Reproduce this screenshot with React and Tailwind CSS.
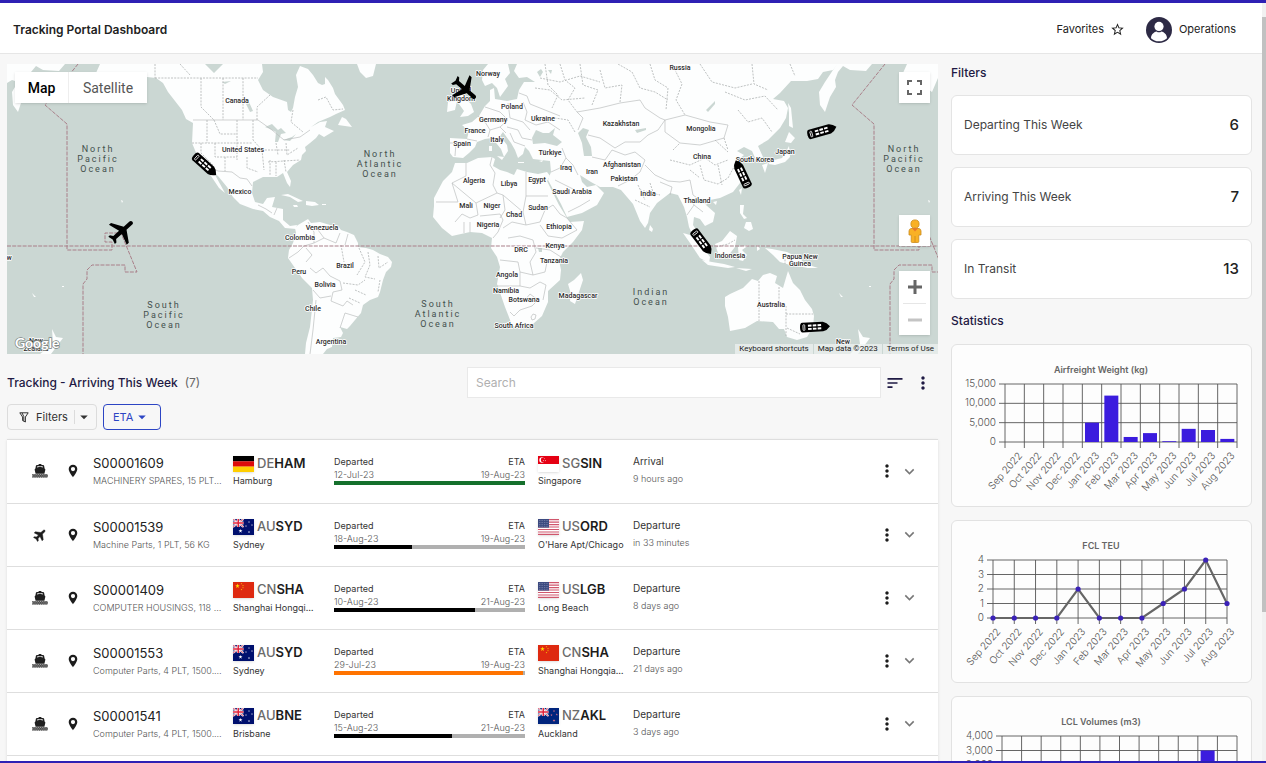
import React from 'react';
import {
  MdMoreVert,
  MdExpandMore,
  MdSort,
  MdStarBorder,
  MdArrowDropDown,
} from 'react-icons/md';

const LAND = [
  // North America
  'M96 73 L100 64 L262 64 L263 72 L258 80 L263 90 L273 97 L287 102 L288 110 L291 112 L293 108 L295 97 L298 87 L296 75 L300 66 L308 69 L313 75 L318 83 L322 85 L325 84 L325 77 L328 80 L333 88 L335 94 L343 105 L345 110 L336 114 L330 117 L318 122 L311 127 L320 122 L327 121 L325 127 L334 131 L324 137 L319 134 L316 138 L310 143 L305 147 L306 151 L302 155 L301 160 L293 165 L287 172 L291 181 L290 187 L287 183 L283 173 L277 177 L269 177 L263 177 L253 182 L252 193 L255 202 L263 204 L267 198 L275 197 L272 207 L283 209 L283 220 L290 226 L297 225 L296 229 L285 228 L279 221 L270 217 L263 211 L253 209 L240 204 L233 197 L227 187 L218 176 L214 173 L225 193 L219 188 L211 176 L205 168 L197 155 L192 143 L193 123 L186 119 L182 110 L175 101 L168 92 L163 83 L156 78 L147 77 L135 73 L120 82 L105 80 Z',
  // Newfoundland, Greenland, Caribbean
  'M338 125 L342 117 L346 119 L352 127 L345 126 Z',
  'M357 64 L376 64 L373 76 L366 78 L360 72 Z',
  'M281 195 L288 194 L303 201 L298 202 L290 197 Z',
  'M306 201 L315 202 L319 205 L312 206 L306 205 Z M293 205 l4 0 l1 2 l-4 0 Z M322 204 h4 v1 h-4 Z',
  // South America
  'M295 228 L298 225 L308 219 L311 223 L320 222 L330 225 L337 225 L341 230 L347 232 L354 235 L358 243 L358 247 L366 248 L373 250 L380 254 L388 257 L392 262 L391 267 L386 272 L383 280 L380 292 L378 297 L370 300 L363 305 L361 313 L355 320 L350 326 L347 329 L340 327 L343 333 L341 337 L333 338 L332 347 L327 349 L323 354 L305 354 L306 343 L310 327 L313 300 L312 288 L302 278 L295 268 L288 258 L289 250 L293 243 L296 233 Z',
  // Africa
  'M455 163 L467 163 L478 158 L492 157 L495 159 L493 166 L500 170 L507 172 L514 175 L517 169 L527 172 L538 174 L547 172 L550 176 L547 181 L553 193 L559 205 L567 218 L570 222 L584 221 L582 230 L573 242 L563 252 L559 260 L561 270 L560 280 L548 291 L548 302 L542 316 L533 324 L517 328 L512 325 L505 307 L497 284 L500 267 L497 257 L491 248 L492 238 L482 233 L470 232 L452 236 L442 228 L433 217 L434 206 L434 198 L443 181 L452 172 Z',
  'M568 284 L574 280 L581 273 L583 280 L575 304 L570 301 L571 294 Z',
  // Eurasia
  'M450 138 L467 139 L469 131 L462 125 L472 122 L479 116 L485 106 L490 101 L490 90 L494 88 L495 99 L507 101 L517 99 L519 90 L524 82 L535 82 L527 77 L519 78 L514 71 L517 64 L838 64 L833 70 L823 72 L818 79 L807 81 L791 81 L780 93 L773 99 L784 101 L788 108 L786 118 L780 128 L768 140 L758 146 L763 157 L756 160 L752 151 L744 147 L737 151 L744 155 L737 161 L741 173 L740 183 L733 192 L720 198 L710 200 L706 205 L715 213 L713 222 L705 226 L700 219 L694 217 L693 225 L698 233 L700 242 L694 238 L689 227 L687 217 L684 207 L678 195 L670 193 L657 203 L650 213 L648 223 L645 228 L640 221 L633 204 L627 197 L621 190 L613 187 L600 187 L591 182 L580 175 L582 182 L587 187 L596 185 L604 193 L597 205 L582 213 L567 217 L561 204 L555 193 L548 180 L551 172 L550 161 L533 159 L529 151 L525 147 L523 154 L518 158 L515 150 L511 143 L503 132 L500 136 L507 145 L508 151 L504 157 L501 149 L492 138 L485 139 L477 142 L475 147 L469 153 L463 158 L453 157 L450 153 Z',
  // Kamchatka and Alaska on the right edge
  'M825 112 L820 105 L819 92 L825 82 L833 70 L837 64 L872 64 L866 71 L850 70 L843 66 L838 72 L835 80 L836 87 L830 97 Z',
  'M903 73 L907 64 L938 64 L938 78 L932 92 L915 80 Z',
  'M7 64 L65 64 L59 71 L43 70 L36 66 L31 72 L28 80 L29 87 L23 97 L18 112 L13 105 L12 92 L18 82 L12 80 L7 83 Z',
  // Scandinavia, Britain, Ireland
  'M482 80 L483 70 L488 64 L508 64 L510 73 L505 79 L508 86 L500 97 L497 88 L492 83 L485 86 Z',
  'M455 90 L463 87 L464 97 L471 104 L474 112 L468 116 L460 117 L464 111 L459 104 Z M448 102 L457 101 L455 110 L447 112 Z',
  // Mediterranean islands
  'M489 146 h3 v5 h-3 Z M497 156 l7 1 l-2 3 Z M518 162 h6 v1 h-6 Z M539 161 l4 -1 l-1 2 Z',
  // Sri Lanka, Japan, Sakhalin, Taiwan, Hainan
  'M650 225 L653 229 L652 232 L649 230 Z',
  'M762 165 L768 163 L765 173 Z M768 164 L774 160 L782 158 L787 150 L789 146 L790 157 L785 162 L775 165 Z M785 142 L789 132 L795 138 L791 143 Z',
  'M788 103 L791 108 L793 128 L789 126 L789 113 Z M739 190 l3 -2 l-1 7 Z M713 202 l4 -1 l-1 4 Z',
  // Philippines and Indonesia
  'M740 205 L744 205 L743 214 L747 218 L744 219 L740 213 Z M746 222 L751 222 L753 229 L749 231 L744 228 Z',
  'M683 233 L690 235 L704 249 L710 257 L709 263 L700 258 L690 243 Z',
  'M702 260 L712 262 L724 264 L735 267 L728 268 L708 265 Z',
  'M715 244 L722 241 L730 231 L737 236 L735 247 L728 256 L718 253 Z',
  'M738 247 L749 245 L742 250 L747 255 L743 261 L739 260 Z',
  'M757 245 l3 4 l-3 2 Z M736 268 l16 1 l-6 2 Z',
  'M765 248 L772 249 L787 252 L799 258 L806 264 L818 268 L808 268 L797 266 L790 265 L780 262 L773 255 Z',
  // Australia, New Zealand, Pacific islands
  'M725 297 L730 294 L743 288 L752 279 L758 281 L763 275 L770 273 L777 276 L775 283 L783 288 L788 271 L793 283 L800 290 L805 300 L812 309 L814 316 L813 327 L807 337 L797 340 L787 337 L784 329 L779 329 L773 322 L757 321 L745 328 L730 331 L728 317 L725 306 Z',
  'M858 329 L863 337 L870 338 L864 346 L858 354 L850 354 L860 344 Z M52 329 L56 337 L63 338 L57 346 L51 354 L40 354 L53 344 Z',
  'M839 293 l4 4 l-2 0 Z M32 293 l4 4 l-2 0 Z M121 200 l2 1 l-1 2 Z M928 200 l2 1 l-1 2 Z M62 286 h2 v1 h-2 Z M869 286 h2 v1 h-2 Z',
];

const WATER = [
  'M532 138 L536 130 L543 133 L549 133 L555 128 L553 135 L562 142 L557 146 L545 143 L533 144 Z',
  'M578 133 L583 128 L589 130 L586 137 L591 147 L592 156 L584 156 L582 143 Z',
  'M265 127 L272 124 L278 130 L281 128 L286 133 L281 134 L278 142 L275 142 L276 132 L270 129 Z M283 140 L292 137 L296 134 L290 141 Z',
  'M537 72 l4 -3 l2 3 l-3 5 Z M548 70 l4 0 l-1 4 Z M635 130 l11 -2 l0 2 l-9 3 Z M706 110 l9 -9 l0 3 l-7 8 Z',
  'M205 64 L223 64 L214 73 Z M246 104 l3 -2 l4 9 l-3 1 Z M538 248 l4 0 l0 4 l-3 0 Z M222 82 l9 -1 l-6 3 Z',
];

const BORDERS = [
  'M193 120 L258 120 L272 130 L284 140 L300 137 L310 130',
  'M205 165 L218 171 L232 172 L240 178 L247 179 L252 186',
  'M258 205 L266 209 L272 213 M277 208 L274 215',
  'M289 258 L298 252 L304 246 L314 243 L314 232 L308 222 M314 243 L324 238 L318 230 M324 238 L336 243 L340 233 M345 245 L348 234 M310 268 L316 273 L323 268 L330 276 L340 281 L342 290 L333 292 L331 301 L343 306 L347 301 L353 305 M313 290 L320 298 L331 296 M306 262 L312 255 L306 248',
  'M340 328 L345 313 L358 317 M316 300 L313 330 L310 354',
  'M492 157 L490 165 L495 173 L493 185 L497 193 L476 203 L452 183 L466 176 L466 163 M526 172 L526 196 L548 196 M526 196 L523 212 L503 195 L497 193 M452 183 L458 202 L436 202 M476 203 L478 215 L470 218 L462 214 L455 222 M480 216 L500 214 L503 220 L498 232 L493 238 M503 195 L505 210 L500 218 M523 212 L526 225 L512 222 L503 228 M526 225 L540 222 L545 210 L553 205 L560 214 L567 218 L577 230 L562 238 L548 236 L540 225 M508 238 L520 236 L533 240 L536 252 L530 262 L533 275 L520 272 L518 262 L500 260 M536 248 L550 250 L561 257 M533 275 L545 272 L547 262 M520 272 L520 286 L497 286 M520 286 L530 288 L540 282 L546 285 L543 300 M525 300 L530 294 L538 300 L532 306 L520 310 L514 316 L510 312 M470 232 L470 222 M464 233 L464 222',
  'M531 317 l2 -3 l3 1 l-1 4 l-3 1 Z',
  'M450 143 L456 143 L455 156 M467 139 L477 141 M478 116 L485 122 L490 130 L488 137 M485 107 L500 112 L508 120 L500 127 L490 130 M508 103 L510 118 L523 122 L530 130 M523 102 L527 112 L525 120 L536 125 L548 122 L560 130 M507 127 L518 130 L522 138 L532 140 M510 133 L514 142 L525 146 M519 93 L527 96 L530 104 L545 110 L560 116 M500 127 L506 133',
  'M578 130 L583 118 L577 112 L600 108 L620 103 L640 100 L645 108 L660 118 L665 120 L658 130 L648 135 L640 142 L625 142 L615 148 L600 138 L588 135 M665 120 L685 115 L710 122 L728 125 L724 138 L700 145 L680 143 L665 132 L665 120 M592 157 L605 160 L612 150 L625 155 L635 152 L645 160 L640 172 L630 180 L618 186 M551 172 L560 168 L566 158 L573 165 L578 175 M555 180 L565 185 L575 190 M566 158 L562 148 M645 165 L655 175 L668 181 L680 182 L690 180 M660 182 L672 187 L670 195 M690 180 L693 195 L700 200 L706 204 M687 215 L694 205 L690 198 M694 205 L703 212',
  'M568 212 L580 206 L590 200',
];

const DOTTED = [
  'M155 78 L258 78 M201 78 L201 107 L214 120 M223 78 L223 120 M243 78 L243 120 M257 120 L257 107 L270 95 M155 64 L155 78 M293 110 L291 122 L303 132 M318 100 L326 97 L333 110 L343 109 M192 143 L252 143 M207 120 L207 143 M214 120 L220 134 L237 134 M237 120 L237 160 M253 120 L253 140 L262 150 M201 143 L201 153 L213 165 M215 143 L215 157 L237 157 M225 157 L225 171 M247 157 L247 168 L258 172 M252 150 L290 150 M262 150 L264 170 M270 160 L270 176 M276 162 L276 176 M284 160 L286 172 M268 162 L300 160 M276 143 L278 155 M286 143 L287 155 L298 148 M180 64 L190 75',
  'M359 248 L365 262 L357 275 M368 252 L370 265 L365 277 L375 279 M378 256 L379 268 L388 262 M343 283 L358 285 L365 280 M355 290 L366 295 M349 298 L360 303 M341 245 L344 262 M380 280 L378 292',
  'M545 64 L548 85 L558 95 L552 108 M560 64 L565 80 L575 88 L568 100 L577 112 M580 64 L583 85 L598 90 L592 105 M600 70 L605 88 L622 85 L620 102 M618 64 L632 72 L640 88 L655 92 L668 100 M650 64 L655 80 L668 88 L666 110 M535 88 L550 90 L562 100 L585 98 M540 78 L560 82 L580 76 L600 82 M672 64 L682 84 L676 100 L685 115 M700 64 L712 82 L735 88 L752 84 M752 64 L754 84 L768 90 M725 92 L745 100 L765 96 L778 110 M738 110 L748 122 L762 118 L772 132 M790 64 L795 76 M575 132 L568 120 L555 118',
  'M670 160 L690 165 L705 158 L715 165 L728 160 M700 165 L704 180 L718 184 L728 178 M718 165 L722 185 M690 170 L700 178 M735 165 L728 178 M724 138 L728 150 M673 150 L680 143 M638 185 L645 200 M650 183 L655 198 M635 200 L650 207 M640 190 L660 195 M715 140 L728 152',
  'M759 281 L759 321 M779 287 L779 306 L786 306 L786 336 M786 314 L813 314 M787 328 L800 334 M785 253 L785 264 M716 247 L728 244 L735 240',
];

const DATE_LINE =
  'M78 64 L45 105 L67 124 L67 250 L112 250 L112 242 L105 242 L105 233 L121 233 L137 272 L125 272 L125 265 L92 265 L87 270 L87 279 L83 284 L83 354';

const COUNTRIES = [
  ['Canada', 237, 103], ['United States', 243, 152], ['Mexico', 240, 194],
  ['Venezuela', 322, 230], ['Colombia', 300, 240], ['Brazil', 345, 268],
  ['Peru', 299, 274], ['Bolivia', 325, 287], ['Chile', 313, 311],
  ['Argentina', 331, 344], ['Norway', 488, 76], ['United', 461, 93],
  ['Kingdom', 461, 101], ['Poland', 512, 109], ['Germany', 493, 122],
  ['Ukraine', 543, 121], ['France', 475, 133], ['Italy', 497, 142],
  ['Spain', 462, 146], ['Türkiye', 550, 155], ['Russia', 680, 70],
  ['Kazakhstan', 621, 126], ['Mongolia', 701, 131], ['China', 702, 159],
  ['Japan', 785, 154], ['South Korea', 755, 162], ['Afghanistan', 622, 167],
  ['Pakistan', 624, 181], ['Iran', 592, 174], ['Iraq', 566, 170],
  ['India', 648, 196], ['Thailand', 697, 203], ['Saudi Arabia', 572, 194],
  ['Algeria', 474, 183], ['Libya', 509, 186], ['Egypt', 537, 182],
  ['Mali', 466, 208], ['Niger', 492, 208], ['Chad', 514, 217],
  ['Sudan', 538, 210], ['Nigeria', 488, 227], ['Ethiopia', 559, 229],
  ['Kenya', 555, 248], ['DRC', 521, 252], ['Tanzania', 554, 263],
  ['Angola', 507, 277], ['Namibia', 506, 293], ['Botswana', 524, 302],
  ['Madagascar', 578, 298], ['South Africa', 514, 328], ['Indonesia', 730, 258],
  ['Papua New', 800, 259], ['Guinea', 800, 266], ['Australia', 771, 307],
  ['New', 843, 344], ['New', 36, 343], ['Zealand', 36, 351], ['w', 9, 260],
];

const OCEANS = [
  [['North', 'Pacific', 'Ocean'], 97, 152],
  [['North', 'Atlantic', 'Ocean'], 379, 157],
  [['South', 'Pacific', 'Ocean'], 163, 308],
  [['South', 'Atlantic', 'Ocean'], 437, 307],
  [['Indian', 'Ocean'], 650, 295],
  [['North', 'Pacific', 'Ocean'], 903, 152],
];

const VESSELS = [
  [205, 165, 42], [742, 174, -115], [702, 242, 53], [822, 131, -16], [815, 327, -3],
];

const PLANE =
  'M21 16v-2l-8-5V3.5c0-.83-.67-1.5-1.5-1.5S10 2.67 10 3.5V9l-8 5v2l8-2.5V19l-2 1.5V22l3.5-1 3.5 1v-1.5L13 19v-5.5l8 2.5z';

function Vessel({ x, y, angle }) {
  return (
    <g transform={`translate(${x} ${y}) rotate(${angle})`}>
      <path d="M-12.5 -4.8 H8 Q12 -4 15 0 Q12 4 8 4.8 H-12.5 Q-15 4.8 -15 0 Q-15 -4.8 -12.5 -4.8 Z" fill="#000" />
      <rect x="-12" y="-2.8" width="1.8" height="5.6" rx="0.6" fill="none" stroke="#fff" strokeWidth="0.8" />
      <path d="M-7 -2.6h3.6v1.9h-3.6z M-2.2 -2.6h3.6v1.9h-3.6z M2.6 -2.6h3.6v1.9h-3.6z M-7 0.7h3.6v1.9h-3.6z M-2.2 0.7h3.6v1.9h-3.6z M2.6 0.7h3.6v1.9h-3.6z" fill="#fff" />
    </g>
  );
}

function WorldMap() {
  return (
    <div className="relative h-[290px] overflow-hidden bg-[#cbd7d3] font-['Roboto',sans-serif]">
      <svg viewBox="7 64 931 290" preserveAspectRatio="xMidYMid slice" className="block h-full w-full" role="img" aria-label="World map">
        <g fill="#fdfefe">
          {LAND.map((d) => <path key={d} d={d} />)}
        </g>
        <g fill="#cbd7d3">
          {WATER.map((d) => <path key={d} d={d} />)}
        </g>
        <g fill="none" stroke="#bcbfbf" strokeWidth="0.7" strokeLinejoin="round">
          {BORDERS.map((d) => <path key={d} d={d} />)}
        </g>
        <g fill="none" stroke="#aeb2b2" strokeWidth="0.8" strokeDasharray="2 1.2">
          {DOTTED.map((d) => <path key={d} d={d} />)}
        </g>
        <g fill="none" stroke="#a97f89" strokeWidth="1" strokeDasharray="4 1.2">
          <path d="M7 246 H938" />
          <path d={DATE_LINE} />
          <path d={DATE_LINE} transform="translate(807 0)" />
        </g>
        <g className="text-[7px] font-medium" fill="#2b2b2b" stroke="#fff" strokeWidth="1.6" paintOrder="stroke" strokeLinejoin="round" textAnchor="middle">
          {COUNTRIES.map(([name, x, y]) => <text key={`${name}${x}`} x={x} y={y}>{name}</text>)}
        </g>
        <g className="text-[9px] tracking-[2px]" fill="#44504d" textAnchor="middle">
          {OCEANS.map(([lines, x, y]) => (
            <text key={`${x}-${y}`} x={x} y={y}>
              {lines.map((line, i) => <tspan key={line} x={x + 1} dy={i ? 10 : 0}>{line}</tspan>)}
            </text>
          ))}
        </g>
        <text x="15" y="348" className="font-['Lato',sans-serif] text-[14px] font-bold" fill="#fff" stroke="#7d8583" strokeWidth="1.4" paintOrder="stroke">Google</text>
        <path d={PLANE} transform="translate(122 231) rotate(48) scale(1.4) translate(-11.5 -12)" />
        <path d={PLANE} transform="translate(465 89) rotate(131) scale(1.4) translate(-11.5 -12)" />
        {VESSELS.map(([x, y, angle]) => <Vessel key={x} x={x} y={y} angle={angle} />)}
      </svg>

      <div className="absolute left-2 top-2 flex h-[31px] bg-white text-sm shadow">
        <button type="button" className="w-[54px] border-r border-[#eee] font-medium text-black">Map</button>
        <button type="button" className="w-[78px] text-[#565656]">Satellite</button>
      </div>

      <div className="absolute right-2 top-2 flex h-[263px] w-[31px] flex-col">
        <button type="button" aria-label="Toggle fullscreen" className="flex h-[31px] items-center justify-center bg-white shadow">
          <svg width="15" height="15" viewBox="0 0 15 15" fill="none" stroke="#666" strokeWidth="2">
            <path d="M1 5V1H5 M10 1H14V5 M14 10V14H10 M5 14H1V10" />
          </svg>
        </button>
        <button type="button" aria-label="Street View" className="mt-auto flex h-[31px] items-center justify-center bg-white shadow">
          <svg width="14" height="24" viewBox="0 0 14 24">
            <path d="M3 9.5 Q1 10 1 12 V16 H3.2 V22.5 Q3.2 23.5 4.2 23.5 H9.8 Q10.8 23.5 10.8 22.5 V16 H13 V12 Q13 10 11 9.5 Z" fill="#f9b125" stroke="#c98a1c" strokeWidth="0.8" />
            <circle cx="7" cy="5" r="4.1" fill="#f9b125" stroke="#c98a1c" strokeWidth="0.8" />
            <path d="M4 9.2 H10 L7 12.5 Z" fill="#e9762b" />
            <path d="M7 17v6" stroke="#c98a1c" strokeWidth="0.8" />
          </svg>
        </button>
        <div className="mt-[25px] flex h-[64px] flex-col items-center bg-white shadow">
          <button type="button" aria-label="Zoom in" className="flex h-8 w-full items-center justify-center">
            <svg width="14" height="14" viewBox="0 0 14 14" stroke="#666" strokeWidth="3"><path d="M7 0V14M0 7H14" /></svg>
          </button>
          <div className="h-px w-[23px] bg-[#e6e6e6]" />
          <button type="button" aria-label="Zoom out" className="flex h-[31px] w-full items-center justify-center">
            <svg width="14" height="14" viewBox="0 0 14 14" stroke="#c4c4c4" strokeWidth="3"><path d="M0 7H14" /></svg>
          </button>
        </div>
      </div>

      <div className="absolute bottom-0 right-0 flex h-[10px] gap-px text-[8px] leading-[10px] text-[#222]">
        <button type="button" className="bg-[#f0f3f2]/70 px-1">Keyboard shortcuts</button>
        <span className="bg-[#f0f3f2]/70 px-1">Map data ©2023</span>
        <a href="#terms" className="bg-[#f0f3f2]/70 px-1">Terms of Use</a>
      </div>
    </div>
  );
}

const STAR = 'M0 -1 L0.23 -0.31 L0.95 -0.31 L0.36 0.12 L0.59 0.81 L0 0.38 L-0.59 0.81 L-0.36 0.12 L-0.95 -0.31 L-0.23 -0.31 Z';

function Star({ x, y, r, fill }) {
  return <path d={STAR} fill={fill} transform={`translate(${x} ${y}) scale(${r})`} />;
}

function UnionJack() {
  return (
    <g>
      <path d="M0 0 L10.5 8 M10.5 0 L0 8" stroke="#fff" strokeWidth="1.8" />
      <path d="M0 0 L10.5 8 M10.5 0 L0 8" stroke="#e0233c" strokeWidth="0.7" />
      <path d="M5.25 0V8M0 4H10.5" stroke="#fff" strokeWidth="2.8" />
      <path d="M5.25 0V8M0 4H10.5" stroke="#e0233c" strokeWidth="1.5" />
    </g>
  );
}

function FlagArt({ code }) {
  switch (code) {
    case 'DE':
      return (
        <g>
          <rect width="21" height="5.4" fill="#000" />
          <rect y="5.3" width="21" height="5.4" fill="#dd0b0b" />
          <rect y="10.6" width="21" height="5.4" fill="#ffce00" />
        </g>
      );
    case 'AU':
      return (
        <g>
          <rect width="21" height="16" fill="#00106e" />
          <UnionJack />
          <Star x={7.5} y={12} r={2.1} fill="#fff" />
          <Star x={16} y={3} r={1} fill="#fff" />
          <Star x={13} y={7} r={1} fill="#fff" />
          <Star x={19} y={6} r={1} fill="#fff" />
          <Star x={16} y={13} r={1.2} fill="#fff" />
        </g>
      );
    case 'NZ':
      return (
        <g>
          <rect width="21" height="16" fill="#00247d" />
          <UnionJack />
          <Star x={16} y={3} r={1.2} fill="#e8788a" />
          <Star x={13.5} y={7} r={1.2} fill="#e8788a" />
          <Star x={18.8} y={6.5} r={1.2} fill="#e8788a" />
          <Star x={16} y={12.5} r={1.4} fill="#e8788a" />
        </g>
      );
    case 'CN':
      return (
        <g>
          <rect width="21" height="16" fill="#de2910" />
          <Star x={4.5} y={4} r={2.4} fill="#ffde00" />
          <Star x={8.5} y={1.8} r={0.8} fill="#ffde00" />
          <Star x={10} y={3.6} r={0.8} fill="#ffde00" />
          <Star x={10} y={5.8} r={0.8} fill="#ffde00" />
          <Star x={8.5} y={7.6} r={0.8} fill="#ffde00" />
        </g>
      );
    case 'SG':
      return (
        <g>
          <rect width="21" height="16" fill="#fff" />
          <rect width="21" height="8" fill="#e50013" />
          <circle cx="4" cy="4" r="2.7" fill="#fff" />
          <circle cx="5.2" cy="4" r="2.4" fill="#e50013" />
          <Star x={6.4} y={2.6} r={0.7} fill="#fff" />
          <Star x={5.4} y={4.8} r={0.7} fill="#fff" />
          <Star x={7.4} y={4.8} r={0.7} fill="#fff" />
        </g>
      );
    default:
      return (
        <g>
          <rect width="21" height="16" fill="#fff" />
          <path d="M0 0.6H21M0 3.1H21M0 5.6H21M0 8H21M0 10.5H21M0 13H21M0 15.4H21" stroke="#d0566c" strokeWidth="1.2" />
          <rect width="11" height="8.6" fill="#3c4a80" />
          <path d="M1 1.5H11M1 3.5H11M1 5.5H11M1 7.3H11" stroke="#aab0cc" strokeWidth="0.6" strokeDasharray="0.7 1" />
        </g>
      );
  }
}

function Port({ country, code, name }) {
  return (
    <div>
      <div className="flex h-[17px] items-center gap-[3px]">
        <svg width="21" height="16" viewBox="0 0 21 16" className="shrink-0 shadow" role="img" aria-label={country}>
          <FlagArt code={country} />
        </svg>
        <span className="text-[13px] font-medium text-[#6b6b6b]">
          {country}<span className="font-semibold text-[#1c1c1c]">{code}</span>
        </span>
      </div>
      <div className="truncate text-[9px] leading-[17px] text-[#333]">{name}</div>
    </div>
  );
}

function ShipIcon() {
  return (
    <svg width="16" height="14" viewBox="0 0 16 14" aria-label="Sea" role="img">
      <path d="M6.6 0 H9.4 V0.9 H11 Q11.9 0.9 12.1 1.8 L12.6 4.4 L13.4 5.4 L12.4 9.8 H3.6 L2.6 5.4 L3.4 4.4 L3.9 1.8 Q4.1 0.9 5 0.9 H6.6 Z" fill="#1f1f1f" />
      <path d="M5 3.6 L5.4 2.2 H10.6 L11 3.6 L8 2.8 Z" fill="#fff" />
      <rect x="0.3" y="10.2" width="15.4" height="3.3" fill="#8a8a8a" />
      <path d="M0.3 10.8h15.4M0.3 13h15.4" stroke="#333" strokeWidth="1.1" strokeDasharray="1.1 1.1" />
      <path d="M1.4 11.9h14.3" stroke="#333" strokeWidth="1.1" strokeDasharray="1.1 1.1" />
    </svg>
  );
}

function AirIcon() {
  return (
    <svg width="16" height="14" viewBox="0 0 16 14" aria-label="Air" role="img">
      <path d="M8 0.2 C8.7 0.2 9.1 1 9.1 2 V4.6 L13.6 8 V9.6 L9.1 8.1 V10.8 L10.9 12.2 V13.3 L8 12.6 L5.1 13.3 V12.2 L6.9 10.8 V8.1 L2.4 9.6 V8 L6.9 4.6 V2 C6.9 1 7.3 0.2 8 0.2 Z" fill="#1c1c1c" stroke="#1c1c1c" strokeWidth="0.4" transform="rotate(45 8 7)" />
    </svg>
  );
}

function PinIcon() {
  return (
    <svg width="12" height="14" viewBox="0 0 12 14" aria-label="Location" role="img">
      <path fillRule="evenodd" d="M6 0.8 C3.6 0.8 1.7 2.7 1.7 5.1 C1.7 8.3 6 13.2 6 13.2 C6 13.2 10.3 8.3 10.3 5.1 C10.3 2.7 8.4 0.8 6 0.8 Z M6 3 A2.1 2.1 0 1 1 6 7.2 A2.1 2.1 0 1 1 6 3 Z" fill="#1c1c1c" />
    </svg>
  );
}

const SHIPMENTS = [
  { id: 'S00001609', mode: 'sea', goods: 'MACHINERY SPARES, 15 PLT, 1500 KG', from: ['DE', 'HAM', 'Hamburg'], to: ['SG', 'SIN', 'Singapore'], dep: '12-Jul-23', eta: '19-Aug-23', pct: 100, color: '#15702c', event: 'Arrival', when: '9 hours ago' },
  { id: 'S00001539', mode: 'air', goods: 'Machine Parts, 1 PLT, 56 KG', from: ['AU', 'SYD', 'Sydney'], to: ['US', 'ORD', "O'Hare Apt/Chicago"], dep: '18-Aug-23', eta: '19-Aug-23', pct: 41, color: '#000000', event: 'Departure', when: 'in 33 minutes' },
  { id: 'S00001409', mode: 'sea', goods: 'COMPUTER HOUSINGS, 118 PLT, 900 KG', from: ['CN', 'SHA', 'Shanghai Hongqiao Intl'], to: ['US', 'LGB', 'Long Beach'], dep: '10-Aug-23', eta: '21-Aug-23', pct: 74, color: '#000000', event: 'Departure', when: '8 days ago' },
  { id: 'S00001553', mode: 'sea', goods: 'Computer Parts, 4 PLT, 1500.000 KG', from: ['AU', 'SYD', 'Sydney'], to: ['CN', 'SHA', 'Shanghai Hongqiao Intl'], dep: '29-Jul-23', eta: '19-Aug-23', pct: 99, color: '#ff7300', event: 'Departure', when: '21 days ago' },
  { id: 'S00001541', mode: 'sea', goods: 'Computer Parts, 4 PLT, 1500.000 KG', from: ['AU', 'BNE', 'Brisbane'], to: ['NZ', 'AKL', 'Auckland'], dep: '15-Aug-23', eta: '21-Aug-23', pct: 62, color: '#000000', event: 'Departure', when: '3 days ago' },
];

function ShipmentRow({ s }) {
  return (
    <tr className="h-[63px] border-b border-[#dedede]">
      <td className="pl-[25px]">{s.mode === 'sea' ? <ShipIcon /> : <AirIcon />}</td>
      <td className="pl-2"><PinIcon /></td>
      <td className="pr-[9px] pt-[2px]">
        <div className="text-[13px] leading-[17px] text-[#222]">{s.id}</div>
        <div className="truncate text-[9px] font-light leading-[17px] text-[#555]">{s.goods}</div>
      </td>
      <td className="pr-4 pt-[2px]"><Port country={s.from[0]} code={s.from[1]} name={s.from[2]} /></td>
      <td className="pb-[2px] pr-[13px]">
        <div className="flex justify-between text-[9px] leading-[13px] text-[#333]"><span>Departed</span><span>ETA</span></div>
        <div className="flex justify-between text-[9px] font-light leading-[13px] text-[#555]"><span>{s.dep}</span><span>{s.eta}</span></div>
        <div className="h-1 bg-[#b0b0b0]">
          <div className="h-full" style={{ width: `${s.pct}%`, backgroundColor: s.color }} />
        </div>
      </td>
      <td className="pr-2 pt-[2px]"><Port country={s.to[0]} code={s.to[1]} name={s.to[2]} /></td>
      <td className="pb-[2px]">
        <div className="text-[10px] leading-[17px] text-[#333]">{s.event}</div>
        <div className="text-[9px] font-light leading-[17px] text-[#555]">{s.when}</div>
      </td>
      <td>
        <div className="flex items-center gap-[3px]">
          <button type="button" aria-label="More actions" className="text-[#1c1c1c]"><MdMoreVert size={20} /></button>
          <button type="button" aria-label="Expand" className="text-[#777]"><MdExpandMore size={19} /></button>
        </div>
      </td>
    </tr>
  );
}

const MONTHS = ['Sep 2022', 'Oct 2022', 'Nov 2022', 'Dec 2022', 'Jan 2023', 'Feb 2023', 'Mar 2023', 'Apr 2023', 'May 2023', 'Jun 2023', 'Jul 2023', 'Aug 2023'];

const CHARTS = [
  { title: 'Airfreight Weight (kg)', type: 'bar', left: 53, right: 285, ticks: ['15,000', '10,000', '5,000', '0'], max: 15000, values: [0, 0, 0, 0, 5000, 12000, 1300, 2300, 200, 3400, 3100, 800] },
  { title: 'FCL TEU', type: 'line', left: 41, right: 275, ticks: ['4', '3', '2', '1', '0'], max: 4, values: [0, 0, 0, 0, 2, 0, 0, 0, 1, 2, 4, 1] },
  { title: 'LCL Volumes (m3)', type: 'bar', left: 50, right: 285, ticks: ['4,000', '3,000', '2,000', '1,000', '0'], max: 4000, values: [0, 0, 0, 0, 0, 0, 0, 0, 0, 0, 3000, 0] },
];

function ChartCard({ chart }) {
  const { title, type, left, right, ticks, max, values } = chart;
  const top = 39;
  const bottom = 97;
  const bar = type === 'bar';
  const step = (right - left) / (bar ? 12 : 11);
  const gridCount = bar ? 13 : 12;
  const yOf = (v) => bottom - (v / max) * (bottom - top);
  const xOf = (i) => left + step * (bar ? i + 0.5 : i);
  return (
    <div className="overflow-hidden rounded-md border border-[#e2e2e2] bg-[#fdfdfd]">
      <svg viewBox="0 0 299 161" className="block w-full" role="img" aria-label={title}>
        <text x="149" y="28" textAnchor="middle" className="text-[9px] font-semibold" fill="#666">{title}</text>
        <g stroke="#555" strokeWidth="0.9">
          {ticks.map((t, i) => {
            const y = top + ((bottom - top) * i) / (ticks.length - 1);
            return <line key={t} x1={left - 6} x2={right} y1={y} y2={y} />;
          })}
          {Array.from({ length: gridCount }, (_, i) => (
            <line key={i} x1={left + step * i} x2={left + step * i} y1={top} y2={bottom + 6} />
          ))}
        </g>
        <g className="text-[10px] font-light" fill="#555" textAnchor="end">
          {ticks.map((t, i) => (
            <text key={t} x={left - 9} y={top + ((bottom - top) * i) / (ticks.length - 1) + 3}>{t}</text>
          ))}
          {MONTHS.map((m, i) => (
            <text key={m} transform={`translate(${xOf(i) + 8} ${bottom + 14}) rotate(-49)`}>{m}</text>
          ))}
        </g>
        {bar ? (
          <g fill="#3b1cde">
            {values.map((v, i) => v > 0 && <rect key={i} x={xOf(i) - 7} width="14" y={yOf(v)} height={bottom - yOf(v)} />)}
          </g>
        ) : (
          <g>
            <polyline points={values.map((v, i) => `${xOf(i)},${yOf(v)}`).join(' ')} fill="none" stroke="#666" strokeWidth="2.2" />
            {values.map((v, i) => <circle key={i} cx={xOf(i)} cy={yOf(v)} r="2.6" fill="#3b22b8" />)}
          </g>
        )}
      </svg>
    </div>
  );
}

const FILTERS = [['Departing This Week', 6], ['Arriving This Week', 7], ['In Transit', 13]];

export default function App() {
  return (
    <div className="flex h-screen overflow-hidden border-b-2 border-t-[3px] border-[#2e20b4] bg-[#f7f7f7] font-['Inter',sans-serif]">
      <div className="flex min-w-0 flex-1 flex-col">
        <header className="flex h-[51px] shrink-0 items-center border-b border-[#e6e6e6] bg-white pl-[13px] pr-[26px] pt-[3px]">
          <h1 className="text-[12px] font-semibold text-[#222]">Tracking Portal Dashboard</h1>
          <a href="#favorites" className="ml-auto flex items-center gap-[6px] text-[11px] text-[#222]">
            Favorites <MdStarBorder size={15} />
          </a>
          <button type="button" className="ml-[21px] flex items-center gap-[7px] text-[11px] text-[#222]">
            <svg width="26" height="26" viewBox="0 0 26 26" aria-hidden="true">
              <circle cx="13" cy="13" r="13" fill="#2d2a45" />
              <circle cx="13" cy="9.4" r="4.6" fill="#fff" />
              <path d="M5 21.2 C5 16.8 8.6 14.8 10.5 14.4 Q13 16.2 15.5 14.4 C17.4 14.8 21 16.8 21 21.2 Q17.8 24.3 13 24.3 Q8.2 24.3 5 21.2 Z" fill="#fff" />
            </svg>
            Operations
          </button>
        </header>

        <div className="flex min-h-0 flex-1 gap-[13px] overflow-hidden pl-[7px] pr-[10px] pt-[10px]">
          <main className="min-w-0 flex-1">
            <WorldMap />
            <div className="mt-[13px] flex h-[31px] items-center">
              <h2 className="text-[12px] font-medium text-[#1f1a44]">Tracking - Arriving This Week</h2>
              <span className="ml-[7px] text-[12px] text-[#666]">(7)</span>
              <input type="search" aria-label="Search" placeholder="Search" className="ml-auto h-[31px] w-[414px] border border-[#e9e9e9] bg-white px-2 text-[12px] text-[#333] placeholder:text-[#b0b0b0]" />
              <button type="button" aria-label="Sort" className="ml-1 text-[#1f1a44]"><MdSort size={20} /></button>
              <button type="button" aria-label="List options" className="ml-2 mr-[5px] text-[#1f1a44]"><MdMoreVert size={20} /></button>
            </div>
            <div className="mt-[6px] flex h-[26px] gap-[6px]">
              <button type="button" className="flex w-[90px] items-center rounded border border-[#dcdcdc] pl-[11px] text-[11px] text-[#333]">
                <svg width="10" height="11" viewBox="0 0 10 11" fill="none" stroke="#333" strokeWidth="1" className="mr-[7px]">
                  <path d="M0.8 0.8H9.2L6.4 5V10L3.6 8.6V5Z M3 0.8L4.8 4.6V9" strokeLinejoin="round" />
                </svg>
                Filters
                <span className="ml-[6px] h-[14px] w-px bg-[#dcdcdc]" />
                <MdArrowDropDown size={18} />
              </button>
              <button type="button" className="flex w-[58px] items-center rounded border border-[#2c45c4] pl-[9px] text-[11px] text-[#2c45c4]">
                ETA <MdArrowDropDown size={18} />
              </button>
            </div>
            <div className="mt-[9px] border-t border-[#dedede] bg-white shadow">
              <table className="w-full table-fixed border-collapse text-left">
                <colgroup>
                  <col className="w-[52px]" />
                  <col className="w-[34px]" />
                  <col className="w-[140px]" />
                  <col className="w-[101px]" />
                  <col className="w-[204px]" />
                  <col className="w-[95px]" />
                  <col />
                  <col className="w-[61px]" />
                </colgroup>
                <tbody>
                  {SHIPMENTS.map((s) => <ShipmentRow key={s.id} s={s} />)}
                  <tr className="h-[63px]"><td colSpan={8} /></tr>
                </tbody>
              </table>
            </div>
          </main>

          <aside className="w-[301px] shrink-0">
            <h2 className="text-[12px] font-medium leading-[18px] text-[#1f1a44]">Filters</h2>
            <div className="mt-[13px] flex flex-col gap-3">
              {FILTERS.map(([label, count]) => (
                <button key={label} type="button" className="flex h-[60px] items-center justify-between rounded-md border border-[#e4e4e4] bg-white px-3 text-[12px] text-[#444]">
                  {label}
                  <span className="text-[15px] font-medium text-[#222]">{count}</span>
                </button>
              ))}
            </div>
            <h2 className="mt-[13px] text-[12px] font-medium leading-[18px] text-[#1f1a44]">Statistics</h2>
            <div className="mt-[14px] flex flex-col gap-[13px]">
              {CHARTS.map((chart) => <ChartCard key={chart.title} chart={chart} />)}
            </div>
          </aside>
        </div>
      </div>
      <div className="w-1 shrink-0 bg-[#f1f1f1] pt-[14px]" aria-hidden="true">
        <div className="h-[80%] bg-[#c1c1c1]" />
      </div>
    </div>
  );
}
